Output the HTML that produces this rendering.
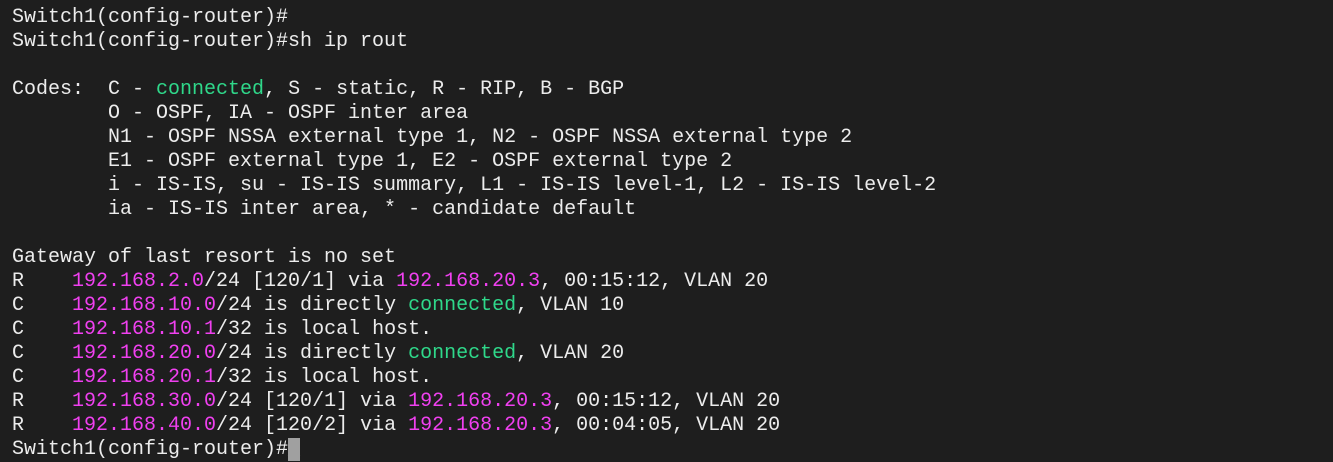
<!DOCTYPE html>
<html><head><style>
html,body{margin:0;padding:0;}
body{width:1333px;height:462px;background:#1e1e1e;position:relative;overflow:hidden;}
pre{position:absolute;left:12px;top:6px;margin:0;font-family:"Liberation Mono",monospace;font-size:20px;line-height:24px;color:#ececec;}
.m{color:#f040f0}.g{color:#2fd88a}
.cur{background:#a0a0a0;color:#a0a0a0}
</style></head><body><pre>Switch1(config-router)#
Switch1(config-router)#sh ip rout

Codes:  C - <span class="g">connected</span>, S - static, R - RIP, B - BGP
        O - OSPF, IA - OSPF inter area
        N1 - OSPF NSSA external type 1, N2 - OSPF NSSA external type 2
        E1 - OSPF external type 1, E2 - OSPF external type 2
        i - IS-IS, su - IS-IS summary, L1 - IS-IS level-1, L2 - IS-IS level-2
        ia - IS-IS inter area, * - candidate default

Gateway of last resort is no set
R    <span class="m">192.168.2.0</span>/24 [120/1] via <span class="m">192.168.20.3</span>, 00:15:12, VLAN 20
C    <span class="m">192.168.10.0</span>/24 is directly <span class="g">connected</span>, VLAN 10
C    <span class="m">192.168.10.1</span>/32 is local host.
C    <span class="m">192.168.20.0</span>/24 is directly <span class="g">connected</span>, VLAN 20
C    <span class="m">192.168.20.1</span>/32 is local host.
R    <span class="m">192.168.30.0</span>/24 [120/1] via <span class="m">192.168.20.3</span>, 00:15:12, VLAN 20
R    <span class="m">192.168.40.0</span>/24 [120/2] via <span class="m">192.168.20.3</span>, 00:04:05, VLAN 20
Switch1(config-router)#<span class="cur">_</span></pre></body></html>
